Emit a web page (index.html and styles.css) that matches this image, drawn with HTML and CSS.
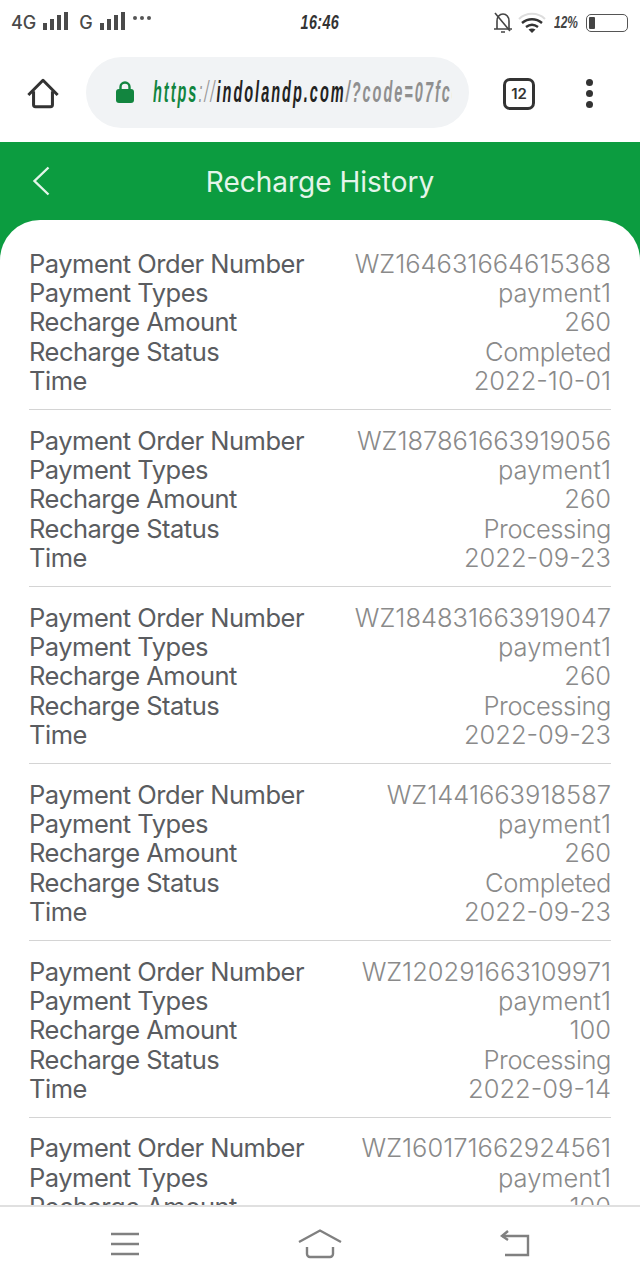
FILE: index.html
```html
<!DOCTYPE html>
<html lang="en">
<head>
<meta charset="utf-8">
<title>Recharge History</title>
<link rel="stylesheet" href="styles.css">
</head>
<body>
<div class="phone">
  <div class="status">
    <div class="status-left">
      <span class="net">4G</span>
      <svg class="bars" width="26" height="20" viewBox="0 0 26 20"><rect x="0" y="12" width="4" height="7"/><rect x="7" y="8" width="4" height="11"/><rect x="14" y="4" width="4" height="15"/><rect x="21" y="1" width="4" height="18"/></svg>
      <span class="net net-g">G</span>
      <svg class="bars" width="26" height="20" viewBox="0 0 26 20"><rect x="0" y="12" width="4" height="7"/><rect x="7" y="8" width="4" height="11"/><rect x="14" y="4" width="4" height="15"/><rect x="21" y="1" width="4" height="18"/></svg>
      <span class="dots"><i></i><i></i><i></i></span>
    </div>
    <div class="clock">16:46</div>
    <div class="status-right">
      <svg class="bell" width="20" height="24" viewBox="0 0 20 24" fill="none" stroke="#444" stroke-width="1.6"><path d="M4 18V10c0-4 2.500-7 6-7s6 3 6 7v8M1 18h18M8 21h4"/><path d="M2 2l15 18"/></svg>
      <svg width="28" height="22" viewBox="0 0 28 22" fill="none"><path d="M1 7C8 0 20 0 27 7" stroke="#ddd" stroke-width="2"/><path d="M4 11c6-5 14-5 20 0M8 15c4-3 8-3 12 0" stroke="#333" stroke-width="2.400"/><path d="M14 21l-3.500-3.500c2-1.500 5-1.500 7 0z" fill="#333"/></svg>
      <span class="pct">12%</span>
      <span class="battery"><i></i></span>
    </div>
  </div>

  <div class="toolbar">
    <svg class="home" width="36" height="34" viewBox="0 0 36 36" fill="none" stroke="#333" stroke-width="3.200" stroke-linejoin="round"><path d="M2.500 19L18 3.500 33.500 19"/><path d="M8 15v14.500a2 2 0 0 0 2 2h16a2 2 0 0 0 2-2V15"/></svg>
    <div class="address">
      <svg width="20" height="24" viewBox="0 0 20 24"><path d="M5.500 10V7a4.500 4.500 0 0 1 9 0v3" fill="none" stroke="#12853f" stroke-width="2.400"/><rect x="1" y="9" width="18" height="14" rx="3" fill="#12853f"/></svg>
      <div class="url-clip"><span class="url"><b class="u-https">https</b><span class="u-sep">://</span><b class="u-host">indolandp.com</b><span class="u-path">/?code=07fcece</span></span></div>
    </div>
    <span class="tabs">12</span>
    <span class="menu"><i></i><i></i><i></i></span>
  </div>

  <div class="app">
    <header class="app-head">
      <svg class="back" width="18" height="30" viewBox="0 0 18 30" fill="none" stroke="#e4f5ea" stroke-width="2.400"><path d="M16.500 1.500L2.500 15l14 13.500"/></svg>
      <h1>Recharge History</h1>
    </header>
    <main class="sheet">
      <section class="rec">
        <div class="row"><span>Payment Order Number</span><span class="val">WZ164631664615368</span></div>
        <div class="row"><span>Payment Types</span><span class="val">payment1</span></div>
        <div class="row"><span>Recharge Amount</span><span class="val">260</span></div>
        <div class="row"><span>Recharge Status</span><span class="val val-word">Completed</span></div>
        <div class="row"><span>Time</span><span class="val">2022-10-01</span></div>
      </section>
      <section class="rec">
        <div class="row"><span>Payment Order Number</span><span class="val">WZ187861663919056</span></div>
        <div class="row"><span>Payment Types</span><span class="val">payment1</span></div>
        <div class="row"><span>Recharge Amount</span><span class="val">260</span></div>
        <div class="row"><span>Recharge Status</span><span class="val val-word">Processing</span></div>
        <div class="row"><span>Time</span><span class="val">2022-09-23</span></div>
      </section>
      <section class="rec">
        <div class="row"><span>Payment Order Number</span><span class="val">WZ184831663919047</span></div>
        <div class="row"><span>Payment Types</span><span class="val">payment1</span></div>
        <div class="row"><span>Recharge Amount</span><span class="val">260</span></div>
        <div class="row"><span>Recharge Status</span><span class="val val-word">Processing</span></div>
        <div class="row"><span>Time</span><span class="val">2022-09-23</span></div>
      </section>
      <section class="rec">
        <div class="row"><span>Payment Order Number</span><span class="val">WZ1441663918587</span></div>
        <div class="row"><span>Payment Types</span><span class="val">payment1</span></div>
        <div class="row"><span>Recharge Amount</span><span class="val">260</span></div>
        <div class="row"><span>Recharge Status</span><span class="val val-word">Completed</span></div>
        <div class="row"><span>Time</span><span class="val">2022-09-23</span></div>
      </section>
      <section class="rec">
        <div class="row"><span>Payment Order Number</span><span class="val">WZ120291663109971</span></div>
        <div class="row"><span>Payment Types</span><span class="val">payment1</span></div>
        <div class="row"><span>Recharge Amount</span><span class="val">100</span></div>
        <div class="row"><span>Recharge Status</span><span class="val val-word">Processing</span></div>
        <div class="row"><span>Time</span><span class="val">2022-09-14</span></div>
      </section>
      <section class="rec">
        <div class="row"><span>Payment Order Number</span><span class="val">WZ160171662924561</span></div>
        <div class="row"><span>Payment Types</span><span class="val">payment1</span></div>
        <div class="row"><span>Recharge Amount</span><span class="val">100</span></div>
      </section>
    </main>
  </div>

  <nav class="sysnav">
    <svg width="32" height="26" viewBox="0 0 32 26" fill="none" stroke="#808080" stroke-width="2.400"><path d="M2 3h28M2 13h28M2 23h28"/></svg>
    <svg width="44" height="30" viewBox="0 0 44 30" fill="none" stroke="#808080" stroke-width="2.400"><path d="M1 13L22 1.500 43 13"/><path d="M9 18v7a3 3 0 0 0 3 3h20a3 3 0 0 0 3-3v-7"/></svg>
    <svg width="32" height="28" viewBox="0 0 32 28" fill="none" stroke="#808080" stroke-width="2.400"><path d="M3 6h26v19H6"/><path d="M9 1L3 6l6 4"/></svg>
  </nav>
</div>
</body>
</html>
```
FILE: styles.css
```css
* { box-sizing: border-box; }
html, body { margin: 0; padding: 0; background: #fff; }
.phone {
  width: 640px; height: 1280px; display: flex; flex-direction: column;
  overflow: hidden; font-family: Inter, "Noto Sans", sans-serif; background: #fff;
}
.status {
  height: 45px; flex: none; display: grid; grid-template-columns: 1fr auto 1fr;
  align-items: center; padding: 0 12px 0 11px; color: #444;
}
.status-left { display: flex; align-items: center; gap: 7px; }
.net { font-size: 18px; font-weight: 500; color: #4a4a4a; }
.net-g { margin-left: 3px; }
.bars { fill: #4a4a4a; margin-bottom: 4px; }
.dots { display: flex; gap: 3px; margin-bottom: 9px; }
.dots i { width: 4px; height: 4px; border-radius: 50%; background: #555; }
.clock {
  font: italic 700 20px "Liberation Sans", sans-serif; color: #333;
  transform: scaleX(.72); letter-spacing: .5px;
}
.status-right { display: flex; align-items: center; justify-content: flex-end; gap: 7px; }
.bell { margin-right: -2px; }
.pct { font: italic 700 17px "Liberation Sans", sans-serif; color: #444; transform: scaleX(.7); margin: 0 -4px; }
.battery {
  width: 42px; height: 18px; border: 1.500px solid #555; border-radius: 5px; padding: 2px; display: block;
}
.battery i { display: block; width: 6px; height: 100%; background: #444; border-radius: 1px; }
.toolbar {
  height: 97px; flex: none; display: flex; align-items: center; padding: 0 0 0 25px;
}
.home { flex: none; }
.address {
  width: 383px; height: 71px; margin: 0 0 3px 25px; border-radius: 36px; background: #f1f3f5;
  display: flex; align-items: center; padding: 0 17px 0 29px; gap: 18px; flex: none;
}
.url-clip { width: 299px; overflow: hidden; white-space: nowrap; }
.url {
  display: inline-block; font: italic 700 29px "Liberation Sans", sans-serif;
  transform: scaleX(.5); transform-origin: left center; letter-spacing: 4px; color: #222;
}
.u-https { color: #12853f; }
.u-sep { color: #999; font-weight: 400; }
.u-host { color: #222; }
.u-path { color: #8f8f8f; }
.tabs {
  width: 32px; height: 32px; margin-left: 34px; border: 3.500px solid #333; border-radius: 7px; flex: none;
  display: flex; align-items: center; justify-content: center; font-size: 15px; font-weight: 600; color: #333;
}
.menu { display: flex; flex-direction: column; gap: 4px; margin-left: 51px; flex: none; }
.menu i { width: 7px; height: 7px; border-radius: 50%; background: #333; }
.app { flex: 1; min-height: 0; display: flex; flex-direction: column; background: #0c9c40; }
.app-head { height: 78px; flex: none; display: flex; align-items: center; justify-content: center; position: relative; }
.back { position: absolute; left: 32px; top: 24px; }
h1 { margin: 1px 0 0; font-size: 28px; font-weight: 400; color: #e4f5ea; }
.sheet {
  flex: 1; min-height: 0; overflow: hidden; background: #fff;
  border-radius: 40px 40px 0 0; padding: 28.500px 29px 0;
}
.rec { border-bottom: 1px solid #d4d4d4; padding-bottom: 14px; margin-bottom: 15px; }
.row {
  height: 29.400px; display: flex; justify-content: space-between; align-items: center;
  font-size: 25.500px; color: #5a5c60; letter-spacing: -.5px; white-space: nowrap;
}
.val { color: #8a8a8a; font-weight: 300; letter-spacing: 0; }
.val-word { letter-spacing: -.4px; }
.sysnav {
  height: 75px; flex: none; border-top: 2px solid #e0e0e0; background: #fff;
  display: flex; align-items: center; justify-content: space-between; padding: 0 109px 0 109px;
}
```
